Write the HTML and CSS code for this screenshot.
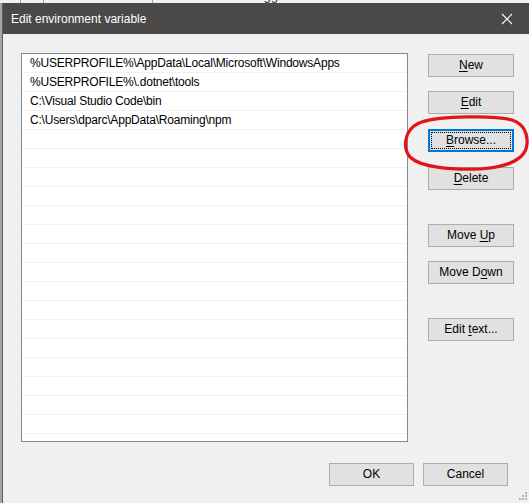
FILE: index.html
```html
<!DOCTYPE html>
<html>
<head>
<meta charset="utf-8">
<link rel="stylesheet" href="styles.css">
</head>
<body>
<div class="backwin">
  <span class="vline v1"></span><span class="vline v2"></span><span class="vline v3"></span>
  <div class="backtext">You must be logged on as an administrator to make most of these changes.</div>
</div>
<div class="stage">
  <div class="leftedge"></div>
  <div class="dialog">
    <div class="caption">
      <span class="title">Edit environment variable</span>
      <svg class="close" width="12" height="12" viewBox="0 0 12 12"><path d="M1 1 L11 11 M11 1 L1 11" stroke="#ffffff" stroke-width="1.1" fill="none"/></svg>
    </div>
    <div class="content">
      <div class="listbox">
        <div class="row">%USERPROFILE%\AppData\Local\Microsoft\WindowsApps</div>
        <div class="row">%USERPROFILE%\.dotnet\tools</div>
        <div class="row">C:\Visual Studio Code\bin</div>
        <div class="row">C:\Users\dparc\AppData\Roaming\npm</div>
        <div class="row"></div><div class="row"></div><div class="row"></div><div class="row"></div>
        <div class="row"></div><div class="row"></div><div class="row"></div><div class="row"></div>
        <div class="row"></div><div class="row"></div><div class="row"></div><div class="row"></div>
        <div class="row"></div><div class="row"></div><div class="row"></div><div class="row"></div>
        <div class="row"></div>
      </div>
      <div class="side">
        <div class="btn"><u>N</u>ew</div>
        <div class="btn gap14"><u>E</u>dit</div>
        <div class="btn focus gap15"><u>B</u>rowse...</div>
        <div class="btn gap15"><u>D</u>elete</div>
        <div class="btn gap34">Move <u>U</u>p</div>
        <div class="btn gap14">Move D<u>o</u>wn</div>
        <div class="btn gap34">Edit <u>t</u>ext...</div>
      </div>
    </div>
    <div class="footer">
      <div class="btn wide">OK</div>
      <div class="btn wide">Cancel</div>
    </div>
    <svg class="grip" width="12" height="12" viewBox="0 0 12 12">
      <rect x="9" y="1" width="2" height="2" fill="#b4b4b4"/>
      <rect x="6" y="4" width="2" height="2" fill="#b4b4b4"/><rect x="9" y="4" width="2" height="2" fill="#b4b4b4"/>
      <rect x="3" y="7" width="2" height="2" fill="#b4b4b4"/><rect x="6" y="7" width="2" height="2" fill="#b4b4b4"/><rect x="9" y="7" width="2" height="2" fill="#b4b4b4"/>
    </svg>
  </div>
  <svg class="circle" width="129" height="62" viewBox="0 0 129 62">
    <path d="M22 10 C40 4 95 3 112 8 C124 12 128 22 127 32 C126 46 110 55 80 57 C50 58 20 55 10 45 C3 37 4 22 14 14 C20 9 30 7 42 6" stroke="#e3131b" stroke-width="3.2" fill="none" stroke-linecap="round"/>
  </svg>
</div>
</body>
</html>
```

FILE: styles.css
```css
html, body {
  margin: 0;
  padding: 0;
  width: 529px;
  height: 503px;
  overflow: hidden;
  background-color: #f0f0f0;
  font-family: "Liberation Sans", Arial, sans-serif;
  font-size: 12px;
}

.backwin {
  position: relative;
  height: 3px;
  overflow: hidden;
  background-color: #f0f0f0;
}
.vline {
  position: absolute;
  top: 0;
  width: 1px;
  height: 3px;
  background-color: #a0a0a0;
}
.v1 { left: 20px; }
.v2 { left: 43px; }
.v3 { left: 152px; }
.backtext {
  margin-left: 178px;
  margin-top: -11px;
  height: 14px;
  line-height: 14px;
  white-space: nowrap;
  color: #1e1e5a;
  font-size: 13px;
}

.stage {
  position: relative;
  display: flex;
  height: 500px;
}
.leftedge {
  width: 2px;
  background-color: #a5a5a5;
}
.dialog {
  position: relative;
  flex: 1;
  border-left: 1px solid #5c5c5c;
  background-color: #f0f0f0;
  display: flex;
  flex-direction: column;
}

.caption {
  height: 31px;
  flex: 0 0 31px;
  background-color: #4b4947;
  display: flex;
  align-items: center;
  justify-content: space-between;
  padding: 0 16px 0 8px;
}
.title {
  color: #ffffff;
  font-size: 12px;
  padding-top: 1px;
}
.close { display: block; }

.content {
  display: flex;
  padding: 19px 0 0 18px;
}
.listbox {
  width: 385px;
  height: 387px;
  border: 1px solid #828790;
  background-color: #ffffff;
  overflow: hidden;
}
.row {
  height: 17px;
  line-height: 17px;
  padding-top: 1px;
  border-bottom: 1px solid #f0f0f0;
  margin: 0 1px;
  padding-left: 7px;
  white-space: nowrap;
  letter-spacing: -0.2px;
  color: #000000;
}

.side {
  margin-left: 20px;
  margin-top: 1px;
  display: flex;
  flex-direction: column;
}
.btn {
  position: relative;
  width: 84px;
  height: 21px;
  line-height: 21px;
  border: 1px solid #adadad;
  background-color: #e1e1e1;
  text-align: center;
  color: #000000;
  box-sizing: content-box;
}
.btn u { text-decoration-thickness: 1px; text-underline-offset: 2px; }
.gap14 { margin-top: 14px; }
.gap15 { margin-top: 15px; }
.gap34 { margin-top: 34px; }
.focus {
  border-color: #0078d7;
  box-shadow: inset 0 0 0 1px #0078d7;
}
.focus::after {
  content: "";
  position: absolute;
  left: 2px; top: 2px; right: 2px; bottom: 2px;
  border: 1px dotted #000000;
}

.footer {
  display: flex;
  justify-content: flex-end;
  gap: 9px;
  margin-top: 21px;
  padding-right: 21px;
}
.wide { width: 83px; }

.grip {
  position: absolute;
  right: 1px;
  bottom: 0;
}
.circle {
  position: absolute;
  left: 400px;
  top: 109px;
}
```
